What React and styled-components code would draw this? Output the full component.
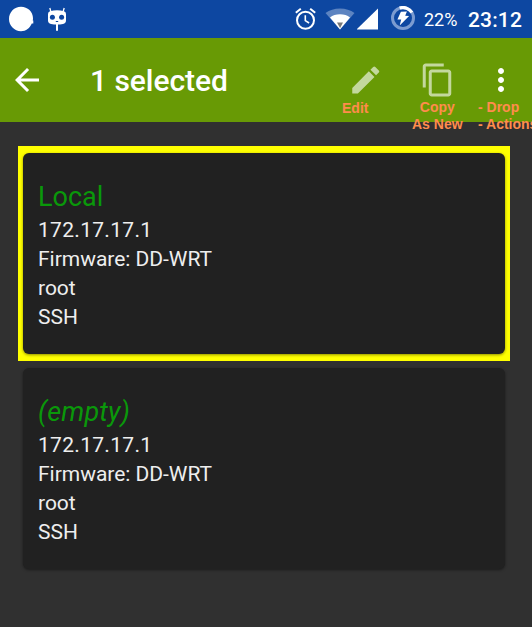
import React from "react";
import styled, { createGlobalStyle, css } from "styled-components";

const GlobalStyle = createGlobalStyle`
  * { box-sizing: border-box; }
  body { margin: 0; background: #303030; overflow: hidden; }
`;

const Screen = styled.div`
  width: 532px;
  height: 627px;
  overflow: hidden;
  background: #303030;
  font-family: Roboto, "Liberation Sans", sans-serif;
`;

const StatusBar = styled.header`
  display: flex;
  align-items: center;
  justify-content: space-between;
  height: 38px;
  padding: 0 10px 0 8px;
  background: #0d47a1;
  color: #fff;
`;

const StatusGroup = styled.div`
  display: flex;
  align-items: center;
  height: 38px;
  svg { display: block; flex: none; }
`;

const Spacer = styled.span`
  flex: none;
  width: ${(p) => p.$w}px;
`;

const Battery = styled.span`
  width: 44px;
  font-size: 18px;
  line-height: 38px;
  margin-top: 2px;
  white-space: nowrap;
`;

const Clock = styled.span`
  width: 54px;
  font-size: 21px;
  font-weight: 500;
  letter-spacing: 0.15px;
  line-height: 38px;
  margin-top: 2px;
  white-space: nowrap;
`;

const Toolbar = styled.nav`
  display: flex;
  align-items: center;
  height: 84px;
  padding-left: 9px;
  background: #689a05;
  color: #fff;
`;

const IconButton = styled.button`
  position: relative;
  flex: none;
  width: 36px;
  height: 36px;
  margin: 0 ${(p) => p.$gap || 0}px 0 0;
  padding: 0;
  border: 0;
  background: none;
  color: ${(p) => (p.$dim ? "#c3d89d" : "#fff")};
  svg { display: block; fill: currentColor; }
`;

const Title = styled.h1`
  flex: 1;
  margin: 2px 0 0 45px;
  font-size: 30px;
  font-weight: 500;
  letter-spacing: -0.05px;
  line-height: 36px;
`;

const Note = styled.span`
  position: absolute;
  top: ${(p) => p.$top}px;
  left: ${(p) => p.$left}px;
  color: #ff8c4c;
  font: bold 14px/17px "Liberation Sans", Arial, sans-serif;
  text-align: ${(p) => p.$align || "left"};
  white-space: pre;
`;

const List = styled.main`
  display: flex;
  flex-direction: column;
  padding: 24px 22px 0 18px;
`;

const Slot = styled.div`
  padding: 7px 5px;
  ${(p) => p.$selected && css`background: #ffff00;`}
`;

const Card = styled.article`
  height: 201px;
  padding: 28px 15px 0;
  border-radius: 6px;
  background: #212121;
  color: #eeeeee;
  box-shadow: 0 1px 3px rgba(0, 0, 0, 0.45);
`;

const Name = styled.h2`
  margin: 0 0 3px;
  color: #0a980a;
  font-size: 27px;
  font-weight: 400;
  font-style: ${(p) => (p.$empty ? "italic" : "normal")};
  letter-spacing: ${(p) => (p.$empty ? "0.2px" : "0")};
  line-height: 32px;
`;

const Detail = styled.p`
  margin: 0;
  font-size: 21px;
  letter-spacing: ${(p) => (p.$numeric ? "0.3px" : "-0.03px")};
  line-height: 29px;
`;

const routers = [
  { name: "Local", selected: true },
  { name: "(empty)", empty: true },
];
const details = ["172.17.17.1", "Firmware: DD-WRT", "root", "SSH"];

const Blob = () => (
  <svg width="26" height="26" viewBox="0 0 26 26">
    <path fill="#fff" d="M13 .8C19.7.8 25 5.8 25 12.3c0 .8-.1 1.5-.3 2.2l.6.1v2.8l-1.5.1C22 22 18 25.2 13 25.2 6.300 25.200 1 19.700 1 13S6.300.8 13 .8z" />
  </svg>
);

const Robot = () => (
  <svg width="20" height="26" viewBox="0 0 20 26">
    <path d="M2.800 2 4 6M17.200 2 16 6" stroke="#fff" strokeWidth="1.300" />
    <path fill="#fff" d="M3 5.200Q10 3.400 17 5.200Q19 5.700 19 8v6.500Q19 17.300 16 18Q10 19.200 4 18Q1 17.300 1 14.500V8Q1 5.700 3 5.200zM9 18h2v6.800H9z" />
    <circle cx="5.400" cy="11.300" r="2.500" fill="#0d47a1" />
    <circle cx="14.600" cy="11.300" r="2.500" fill="#0d47a1" />
    <path d="M8.800 15.500h2.400" stroke="#0d47a1" strokeWidth="1" />
  </svg>
);

const Alarm = () => (
  <svg width="22" height="24" viewBox="0 0 22 24" fill="none" stroke="#fff">
    <circle cx="10.500" cy="13.300" r="8.500" strokeWidth="2" />
    <path d="M.8 5.800 5.800 1.700M20.200 5.800 15.200 1.700" strokeWidth="2" />
    <path d="M10.300 8.300v5.300l3.800 2.400" strokeWidth="1.600" />
  </svg>
);

const Wifi = () => (
  <svg width="30" height="22" viewBox="0 0 30 22">
    <path fill="#5d84c1" d="M.5 5Q6.500.5 15 .5T29.500 5L15 21.500z" />
    <path fill="#fff" d="M5 9.400Q9 6.300 15 6.300T25 9.400L15 21.500z" />
    <path fill="#777" d="M12 14.500h6l-2.900 5.500z" />
  </svg>
);

const Signal = () => (
  <svg width="22" height="22" viewBox="0 0 22 22">
    <path fill="#fff" d="M-.5 21.500 21 .5v21z" />
  </svg>
);

const Charge = () => (
  <svg width="26" height="26" viewBox="0 0 26 26">
    <circle cx="13" cy="12" r="10.500" fill="none" stroke="#7b9bd0" strokeWidth="3" />
    <path d="M9.600 2.100A10.500 10.500 0 0 1 21.900 6.500" fill="none" stroke="#fff" strokeWidth="3.200" />
    <path fill="#fff" d="m10.900 5.700 6-.1-1.700 4.200 3.900.1-9.400 9.500 1.500-6-3.800.1z" />
  </svg>
);

const Glyph = ({ d }) => (
  <svg width="36" height="36" viewBox="0 0 24 24">
    <path d={d} />
  </svg>
);

export default function App() {
  return (
    <Screen>
      <GlobalStyle />
      <StatusBar>
        <StatusGroup>
          <Blob />
          <Spacer $w={13} />
          <Robot />
        </StatusGroup>
        <StatusGroup>
          <Alarm />
          <Spacer $w={8} />
          <Wifi />
          <Spacer $w={2} />
          <Signal />
          <Spacer $w={11} />
          <Charge />
          <Spacer $w={8} />
          <Battery>22%</Battery>
          <Clock>23:12</Clock>
        </StatusGroup>
      </StatusBar>
      <Toolbar>
        <IconButton aria-label="Back">
          <Glyph d="M20 11H7.830l5.590-5.590L12 4l-8 8 8 8 1.410-1.410L7.830 13H20v-2z" />
        </IconButton>
        <Title>1 selected</Title>
        <IconButton $dim $gap={36} aria-label="Edit">
          <Glyph d="M3.500 17.250V21h3.750L18.310 9.940l-3.750-3.750L3.500 17.250zM21.210 7.040a1 1 0 0 0 0-1.410l-2.340-2.340a1 1 0 0 0-1.410 0l-1.830 1.830 3.750 3.750 1.830-1.830z" />
          <Note $top={38} $left={-5}>Edit</Note>
        </IconButton>
        <IconButton $dim $gap={28} aria-label="Copy as new">
          <Glyph d="M16.500 1h-12c-1.100 0-2 .9-2 2v14h2V3h12V1zm3 4h-11c-1.100 0-2 .9-2 2v14c0 1.100.9 2 2 2h11c1.100 0 2-.9 2-2V7c0-1.100-.9-2-2-2zm0 16h-11V7h11v14z" />
          <Note $top={37} $left={-7} $align="center">{"Copy\nAs New"}</Note>
        </IconButton>
        <IconButton $gap={13} aria-label="More">
          <Glyph d="M12 8c1.100 0 2-.9 2-2s-.9-2-2-2-2 .9-2 2 .9 2 2 2zm0 2c-1.100 0-2 .9-2 2s.9 2 2 2 2-.9 2-2-.9-2-2-2zm0 6c-1.100 0-2 .9-2 2s.9 2 2 2 2-.9 2-2-.9-2-2-2z" />
          <Note $top={37} $left={-5}>{"- Drop\n- Actions"}</Note>
        </IconButton>
      </Toolbar>
      <List>
        {routers.map((r) => (
          <Slot key={r.name} $selected={r.selected}>
            <Card>
              <Name $empty={r.empty}>{r.name}</Name>
              {details.map((d) => (
                <Detail key={d} $numeric={/^\d/.test(d)}>{d}</Detail>
              ))}
            </Card>
          </Slot>
        ))}
      </List>
    </Screen>
  );
}
